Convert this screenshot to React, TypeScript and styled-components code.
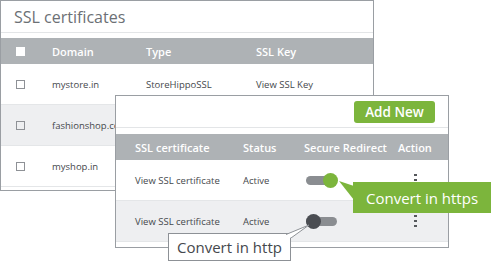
import styled, { createGlobalStyle } from 'styled-components';

const GlobalStyle = createGlobalStyle`
  * { box-sizing: border-box; }
  html, body { margin: 0; padding: 0; background: #fff; }
  body { font-family: 'Open Sans', 'Liberation Sans', sans-serif; }
`;

type Domain = { name: string; type: string; key: string };

const domains: Domain[] = [
  { name: 'mystore.in', type: 'StoreHippoSSL', key: 'View SSL Key' },
  { name: 'fashionshop.com', type: 'StoreHippoSSL', key: 'View SSL Key' },
  { name: 'myshop.in', type: 'StoreHippoSSL', key: 'View SSL Key' },
];

const certs = [{ on: true }, { on: false }];

const Checkbox = ({ filled }: { filled?: boolean }) => <Box $filled={filled} />;

const Toggle = ({ on }: { on: boolean }) => (
  <Track>
    <Knob $on={on} />
  </Track>
);

const Kebab = () => (
  <Dots>
    <i />
    <i />
    <i />
  </Dots>
);

export default function App() {
  return (
    <>
      <GlobalStyle />
      <Stage>
        <BackCard>
          <CardTitle>SSL certificates</CardTitle>
          <BackHead>
            <Checkbox filled />
            <span>Domain</span>
            <span>Type</span>
            <span>SSL Key</span>
          </BackHead>
          {domains.map((d, i) => (
            <BackRow key={d.name} $alt={i % 2 === 1}>
              <Checkbox />
              <span>{d.name}</span>
              <span>{d.type}</span>
              <span>{d.key}</span>
            </BackRow>
          ))}
        </BackCard>

        <FrontPanel>
          <Toolbar>
            <AddButton>Add New</AddButton>
          </Toolbar>
          <FrontHead>
            <span>SSL certificate</span>
            <span>Status</span>
            <span>Secure Redirect</span>
            <span>Action</span>
          </FrontHead>
          {certs.map((c, i) => (
            <FrontRow key={i} $alt={i % 2 === 1}>
              <span>View SSL certificate</span>
              <span>Active</span>
              <Toggle on={c.on} />
              <Kebab />
            </FrontRow>
          ))}
        </FrontPanel>

        <GreenPointer width="16" height="22" viewBox="0 0 16 22">
          <polygon points="0,0 15,5 15,19" fill="#7cb53c" />
        </GreenPointer>
        <GreenTip>Convert in https</GreenTip>

        <WhiteTip>Convert in http</WhiteTip>
        <WhitePointer width="26" height="14" viewBox="0 0 26 14">
          <polygon points="23,1 0,10.5 5,14 5,14" fill="#fff" />
          <polyline points="0,10.5 23,1 5,14" fill="none" stroke="#8d9196" strokeWidth="1" />
        </WhitePointer>
      </Stage>
    </>
  );
}

const Stage = styled.div`
  position: relative;
  width: 491px;
  height: 262px;
  overflow: hidden;
  background: #fff;
`;

const BackCard = styled.div`
  width: 374px;
  height: 191px;
  border: 1px solid #9a9ea3;
  background: #fff;
`;

const CardTitle = styled.div`
  height: 32px;
  padding-left: 13px;
  display: flex;
  align-items: center;
  font-size: 16px;
  font-weight: 500;
  color: #6c7075;
  border-bottom: 1px solid #e3e5e7;
  margin-bottom: 5px;
`;

const backCols = `
  display: grid;
  grid-template-columns: 36px 94px 110px 1fr;
  align-items: center;
  padding-left: 15px;
`;

const BackHead = styled.div`
  ${backCols}
  height: 26px;
  background: #aeb2b5;
  color: #fff;
  font-size: 11px;
  font-weight: 600;
`;

const BackRow = styled.div<{ $alt?: boolean }>`
  ${backCols}
  height: 41px;
  background: ${({ $alt }) => ($alt ? '#eeeff1' : '#fff')};
  border-bottom: 1px solid #e4e6e8;
  color: #45484c;
  font-size: 9.5px;
  white-space: nowrap;
`;

const Box = styled.span<{ $filled?: boolean }>`
  display: block;
  width: 9px;
  height: 9px;
  border: 1px solid ${({ $filled }) => ($filled ? '#fff' : '#8e9196')};
  background: ${({ $filled }) => ($filled ? '#fff' : 'transparent')};
`;

const FrontPanel = styled.div`
  position: absolute;
  left: 115px;
  top: 95px;
  width: 334px;
  height: 153px;
  border: 1px solid #9a9ea3;
  background: #fff;
`;

const Toolbar = styled.div`
  height: 32px;
  display: flex;
  justify-content: flex-end;
  align-items: center;
  padding-right: 13px;
  border-bottom: 1px solid #e3e5e7;
  margin-bottom: 6px;
`;

const AddButton = styled.div`
  width: 81px;
  height: 22px;
  border-radius: 3px;
  background: #7cb53c;
  color: #fff;
  font-size: 13.5px;
  font-weight: 600;
  display: flex;
  align-items: center;
  justify-content: center;
`;

const frontCols = `
  display: grid;
  grid-template-columns: 108px 61px 94px 1fr;
  align-items: center;
  padding-left: 19px;
`;

const FrontHead = styled.div`
  ${frontCols}
  height: 26px;
  background: #aeb2b5;
  color: #fff;
  font-size: 11px;
  font-weight: 600;
`;

const FrontRow = styled.div<{ $alt?: boolean }>`
  ${frontCols}
  height: 41px;
  background: ${({ $alt }) => ($alt ? '#eeeff1' : '#fff')};
  border-bottom: 1px solid #e4e6e8;
  color: #45484c;
  font-size: 9.5px;
  white-space: nowrap;
`;

const Track = styled.div`
  position: relative;
  width: 31px;
  height: 9px;
  margin-left: 2px;
  border-radius: 5px;
  background: #8a8d91;
`;

const Knob = styled.span<{ $on: boolean }>`
  position: absolute;
  top: -3px;
  left: ${({ $on }) => ($on ? '17px' : '0')};
  width: 15px;
  height: 15px;
  border-radius: 50%;
  background: ${({ $on }) => ($on ? '#7cb53c' : '#4a4d52')};
`;

const Dots = styled.div`
  display: flex;
  flex-direction: column;
  gap: 2.5px;
  padding-left: 16px;
  i {
    display: block;
    width: 2.5px;
    height: 2.5px;
    background: #55585c;
  }
`;

const GreenTip = styled.div`
  position: absolute;
  left: 353px;
  top: 182px;
  width: 138px;
  height: 31px;
  background: #7cb53c;
  color: #fff;
  font-size: 15px;
  display: flex;
  align-items: center;
  justify-content: center;
`;

const GreenPointer = styled.svg`
  position: absolute;
  left: 339px;
  top: 181px;
`;

const WhiteTip = styled.div`
  position: absolute;
  left: 168px;
  top: 233px;
  width: 123px;
  height: 28px;
  background: #fff;
  border: 1px solid #8d9196;
  color: #45484c;
  font-size: 15px;
  display: flex;
  align-items: center;
  justify-content: center;
`;

const WhitePointer = styled.svg`
  position: absolute;
  left: 286px;
  top: 224px;
`;
